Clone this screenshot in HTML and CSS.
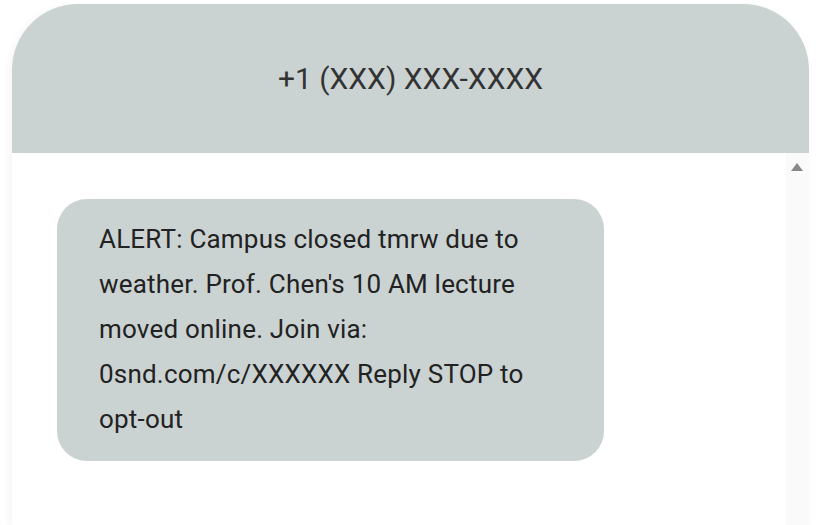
FILE: index.html
```html
<!DOCTYPE html>
<html lang="en">
<head>
    <meta charset="UTF-8">
    <meta name="viewport" content="width=device-width, initial-scale=1.0">
    <title>SMS Preview</title>
    <link rel="stylesheet" href="styles.css">
</head>
<body>
    <div class="phone">
        <div class="phone-header">
            <div class="sender">+1 (XXX) XXX-XXXX</div>
        </div>
        <div class="thread">
            <div class="messages">
                <div class="bubble">
                    ALERT: Campus closed tmrw due to weather. Prof. Chen's 10 AM lecture moved online. Join via: 0snd.com/c/XXXXXX Reply STOP to opt-out
                </div>
            </div>
            <div class="scroll-rail">
                <div class="scroll-up"></div>
            </div>
        </div>
    </div>
</body>
</html>
```

FILE: styles.css
```css
:root {
    --bubble-color: #cbd3d2;
    --text-color: #222;
}

* {
    box-sizing: border-box;
    margin: 0;
    padding: 0;
    font-family: Roboto, 'Liberation Sans', sans-serif;
}

html, body {
    height: 100%;
    overflow: hidden;
}

body {
    background-color: #fff;
    padding: 4px 8px 0 12px;
}

.phone {
    height: 100%;
    border-radius: 66px 66px 0 0;
    background-color: #fff;
    box-shadow: -2px 2px 8px rgba(0, 0, 0, 0.05);
    display: flex;
    flex-direction: column;
}

.phone-header {
    height: 149px;
    flex-shrink: 0;
    background-color: var(--bubble-color);
    border-radius: 66px 66px 0 0;
    display: flex;
    align-items: center;
    justify-content: center;
}

.sender {
    font-size: 30px;
    color: #333;
}

.thread {
    flex: 1;
    display: flex;
}

.messages {
    flex: 1;
    padding: 46px 0 0 45px;
}

.scroll-rail {
    width: 23px;
    background-color: #fafafa;
    display: flex;
    justify-content: center;
    padding-top: 10px;
}

.scroll-up {
    width: 0;
    height: 0;
    margin-left: -1px;
    border-left: 6px solid transparent;
    border-right: 6px solid transparent;
    border-bottom: 8px solid #888;
}

.bubble {
    width: 547px;
    padding: 18px 42px 19px;
    background-color: var(--bubble-color);
    border-radius: 30px;
    font-size: 26px;
    line-height: 45px;
    letter-spacing: 0.2px;
    color: var(--text-color);
}
```
